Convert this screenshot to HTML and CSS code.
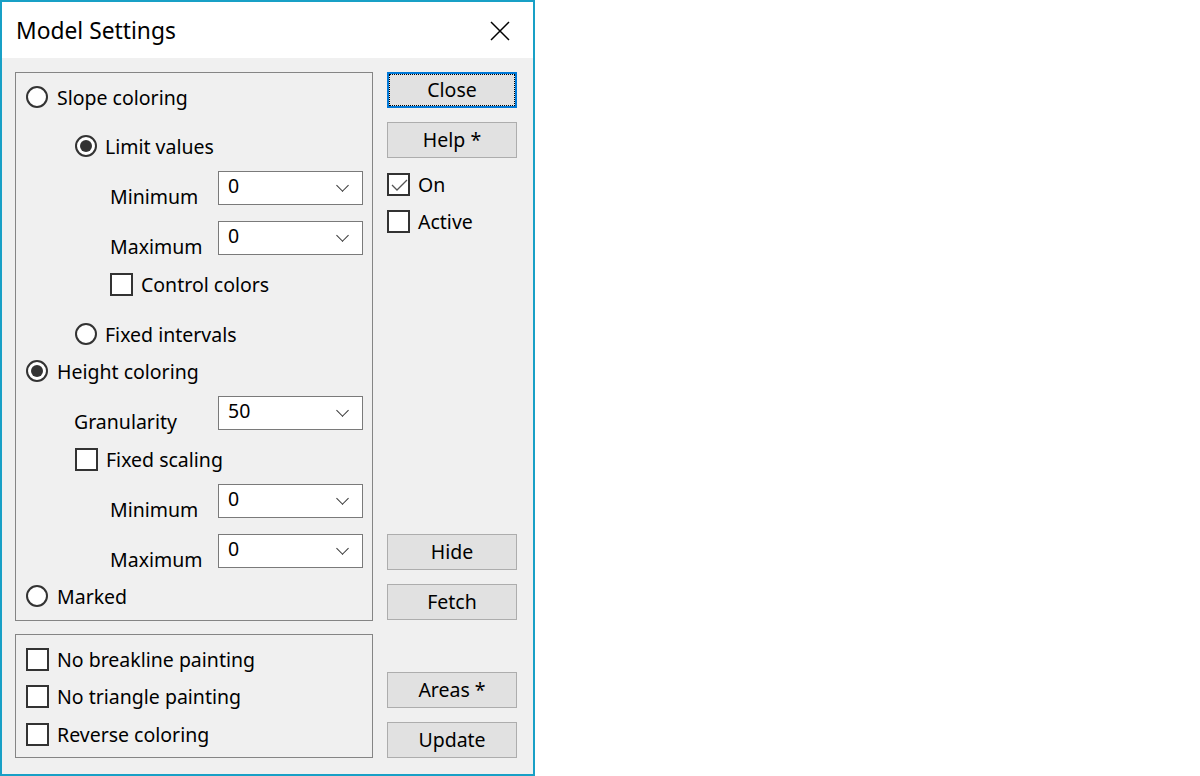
FILE: index.html
```html
<!DOCTYPE html>
<html lang="en">
<head>
<meta charset="UTF-8">
<meta name="viewport" content="width=device-width, initial-scale=1.0">
<title>Model Settings</title>
<link rel="stylesheet" href="styles.css">
</head>
<body>
<div class="window">
    <div class="titlebar">
        <span class="title">Model Settings</span>
        <svg class="close-x" width="20" height="20" viewBox="0 0 20 20">
            <path d="M1 1 L19 19 M19 1 L1 19" stroke="#000" stroke-width="1.5" fill="none"/>
        </svg>
    </div>
    <div class="content">
        <div class="left">
            <div class="group group-main">
                <div class="row row-slope"><span class="radio"></span><span class="text">Slope coloring</span></div>
                <div class="row row-limit lvl1"><span class="radio checked"></span><span class="text">Limit values</span></div>
                <div class="field row-min1 lvl2">
                    <span class="label">Minimum</span>
                    <div class="combo"><span class="value">0</span><span class="chev"></span></div>
                </div>
                <div class="field row-max1 lvl2">
                    <span class="label">Maximum</span>
                    <div class="combo"><span class="value">0</span><span class="chev"></span></div>
                </div>
                <div class="row row-ctrl lvl2"><span class="check"></span><span class="text">Control colors</span></div>
                <div class="row row-fixed lvl1"><span class="radio"></span><span class="text">Fixed intervals</span></div>
                <div class="row row-height"><span class="radio checked"></span><span class="text">Height coloring</span></div>
                <div class="field row-gran lvl1b">
                    <span class="label">Granularity</span>
                    <div class="combo"><span class="value">50</span><span class="chev"></span></div>
                </div>
                <div class="row row-scale lvl1"><span class="check"></span><span class="text">Fixed scaling</span></div>
                <div class="field row-min2 lvl2">
                    <span class="label">Minimum</span>
                    <div class="combo"><span class="value">0</span><span class="chev"></span></div>
                </div>
                <div class="field row-max2 lvl2">
                    <span class="label">Maximum</span>
                    <div class="combo"><span class="value">0</span><span class="chev"></span></div>
                </div>
                <div class="row row-marked"><span class="radio"></span><span class="text">Marked</span></div>
            </div>
            <div class="group group-opts">
                <div class="row row-opt1"><span class="check"></span><span class="text">No breakline painting</span></div>
                <div class="row row-opt2"><span class="check"></span><span class="text">No triangle painting</span></div>
                <div class="row row-opt3"><span class="check"></span><span class="text">Reverse coloring</span></div>
            </div>
        </div>
        <div class="right">
            <div class="btn default">Close</div>
            <div class="btn btn-help">Help *</div>
            <div class="row row-on">
                <span class="check">
                    <svg width="18" height="18" viewBox="0 0 18 18"><path d="M2 10 L7 15 L17 5" stroke="#555" stroke-width="1.3" fill="none"/></svg>
                </span>
                <span class="text">On</span>
            </div>
            <div class="row row-active"><span class="check"></span><span class="text">Active</span></div>
            <div class="btn btn-hide">Hide</div>
            <div class="btn btn-fetch">Fetch</div>
            <div class="btn btn-areas">Areas *</div>
            <div class="btn btn-update">Update</div>
        </div>
    </div>
</div>
</body>
</html>
```

FILE: styles.css
```css
body {
    margin: 0;
    background-color: #fff;
    font-family: "Noto Sans", "Open Sans", sans-serif;
    font-size: 19.5px;
    color: #000;
}
.window {
    width: 535px;
    height: 776px;
    box-sizing: border-box;
    border: 2px solid #18a0c6;
    display: flex;
    flex-direction: column;
    background-color: #f0f0f0;
}
.titlebar {
    height: 56px;
    background-color: #fff;
    display: flex;
    align-items: center;
    padding-left: 14px;
    padding-right: 23px;
}
.title {
    font-size: 22.8px;
    flex: 1;
    margin-top: 1px;
}
.close-x {
    margin-top: 2px;
}
.content {
    display: flex;
    padding: 14px 0 0 13px;
}
.left {
    width: 358px;
    display: flex;
    flex-direction: column;
    gap: 13px;
}
.group {
    box-sizing: border-box;
    border: 1px solid #858585;
    padding: 0 9px 0 10px;
}
.group-main {
    height: 549px;
    padding-top: 12px;
}
.group-opts {
    height: 124px;
    padding-top: 12px;
}
.row {
    height: 24px;
    display: flex;
    align-items: center;
}
.text {
    line-height: 24px;
    white-space: nowrap;
    margin-top: 1px;
}
.radio {
    width: 22px;
    height: 22px;
    box-sizing: border-box;
    border: 2px solid #333;
    border-radius: 50%;
    background-color: #fff;
    margin-right: 9px;
    position: relative;
    flex-shrink: 0;
}
.radio.checked::after {
    content: "";
    position: absolute;
    left: 3px;
    top: 3px;
    width: 12px;
    height: 12px;
    border-radius: 50%;
    background-color: #333;
}
.check {
    width: 23px;
    height: 23px;
    box-sizing: border-box;
    border: 2px solid #333;
    background-color: #fff;
    margin-right: 8px;
    flex-shrink: 0;
    display: flex;
    align-items: center;
    justify-content: center;
}
.lvl1 { padding-left: 49px; }
.lvl1b { padding-left: 48px; }
.lvl2 { padding-left: 84px; }
.lvl1 .radio { margin-right: 8px; }
.field {
    display: flex;
    align-items: flex-start;
    height: 34px;
}
.field .label {
    line-height: 24px;
    margin-top: 14px;
}
.combo {
    margin-left: auto;
    width: 145px;
    height: 34px;
    box-sizing: border-box;
    border: 1px solid #7a7a7a;
    background-color: #fff;
    display: flex;
    align-items: center;
    padding-left: 9px;
}
.combo .value {
    flex: 1;
    line-height: 24px;
    margin-top: -4px;
}
.chev {
    width: 8px;
    height: 8px;
    border-right: 1.3px solid #333;
    border-bottom: 1.3px solid #333;
    transform: rotate(45deg);
    margin-right: 15px;
    margin-top: -5px;
}
.row-limit { margin-top: 25px; }
.row-min1 { margin-top: 13px; }
.row-max1 { margin-top: 16px; }
.row-ctrl { margin-top: 17px; }
.row-fixed { margin-top: 26px; }
.row-height { margin-top: 13px; }
.row-gran { margin-top: 13px; }
.row-scale { margin-top: 17px; }
.row-min2 { margin-top: 13px; }
.row-max2 { margin-top: 16px; }
.row-marked { margin-top: 16px; }
.row-opt2 { margin-top: 13px; }
.row-opt3 { margin-top: 14px; }
.right {
    width: 130px;
    margin-left: 14px;
    display: flex;
    flex-direction: column;
}
.btn {
    height: 36px;
    box-sizing: border-box;
    border: 1px solid #adadad;
    background-color: #e1e1e1;
    display: flex;
    align-items: center;
    justify-content: center;
    line-height: 24px;
}
.btn.default {
    border: 2px solid #0078d7;
    outline: 1px dotted #000;
    outline-offset: -3px;
}
.btn-help { margin-top: 14px; }
.row-on { margin-top: 14px; }
.row-active { margin-top: 13px; }
.btn-hide { margin-top: 301px; }
.btn-fetch { margin-top: 14px; }
.btn-areas { margin-top: 52px; }
.btn-update { margin-top: 14px; }
```
